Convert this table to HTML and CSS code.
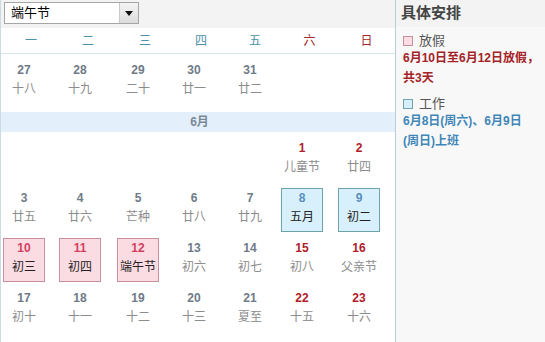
FILE: index.html
```html
<!DOCTYPE html>
<html>
<head>
<meta charset="utf-8">
<link rel="stylesheet" href="styles.css">
</head>
<body>
<div class="page">
  <div class="cal">
    <div class="topbar">
      <div class="select">
        <span class="select-text">端午节</span>
        <span class="select-btn"><span class="tri"></span></span>
      </div>
    </div>
    <div class="grid weekdays">
      <div class="wd">一</div><div class="wd">二</div><div class="wd">三</div><div class="wd">四</div><div class="wd">五</div><div class="wd we">六</div><div class="wd we">日</div>
    </div>
    <div class="grid week">
      <div class="cell"><div class="num">27</div><div class="lun">十八</div></div>
      <div class="cell"><div class="num">28</div><div class="lun">十九</div></div>
      <div class="cell"><div class="num">29</div><div class="lun">二十</div></div>
      <div class="cell"><div class="num">30</div><div class="lun">廿一</div></div>
      <div class="cell"><div class="num">31</div><div class="lun">廿二</div></div>
      <div class="cell empty"></div>
      <div class="cell empty"></div>
    </div>
    <div class="month">6月</div>
    <div class="grid week">
      <div class="cell empty"></div>
      <div class="cell empty"></div>
      <div class="cell empty"></div>
      <div class="cell empty"></div>
      <div class="cell empty"></div>
      <div class="cell red"><div class="num">1</div><div class="lun">儿童节</div></div>
      <div class="cell red"><div class="num">2</div><div class="lun">廿四</div></div>
    </div>
    <div class="grid week">
      <div class="cell"><div class="num">3</div><div class="lun">廿五</div></div>
      <div class="cell"><div class="num">4</div><div class="lun">廿六</div></div>
      <div class="cell"><div class="num">5</div><div class="lun">芒种</div></div>
      <div class="cell"><div class="num">6</div><div class="lun">廿八</div></div>
      <div class="cell"><div class="num">7</div><div class="lun">廿九</div></div>
      <div class="cell work"><div class="num">8</div><div class="lun">五月</div></div>
      <div class="cell work"><div class="num">9</div><div class="lun">初二</div></div>
    </div>
    <div class="grid week">
      <div class="cell hol"><div class="num">10</div><div class="lun">初三</div></div>
      <div class="cell hol"><div class="num">11</div><div class="lun">初四</div></div>
      <div class="cell hol"><div class="num">12</div><div class="lun">端午节</div></div>
      <div class="cell"><div class="num">13</div><div class="lun">初六</div></div>
      <div class="cell"><div class="num">14</div><div class="lun">初七</div></div>
      <div class="cell red"><div class="num">15</div><div class="lun">初八</div></div>
      <div class="cell red"><div class="num">16</div><div class="lun">父亲节</div></div>
    </div>
    <div class="grid week">
      <div class="cell"><div class="num">17</div><div class="lun">初十</div></div>
      <div class="cell"><div class="num">18</div><div class="lun">十一</div></div>
      <div class="cell"><div class="num">19</div><div class="lun">十二</div></div>
      <div class="cell"><div class="num">20</div><div class="lun">十三</div></div>
      <div class="cell"><div class="num">21</div><div class="lun">夏至</div></div>
      <div class="cell red"><div class="num">22</div><div class="lun">十五</div></div>
      <div class="cell red"><div class="num">23</div><div class="lun">十六</div></div>
    </div>
  </div>
  <div class="side">
    <div class="side-head">具体安排</div>
    <div class="item">
      <div class="legend"><span class="sq sq-hol"></span>放假</div>
      <div class="detail detail-hol">6月10日至6月12日放假，<span class="nw">共3天</span></div>
    </div>
    <div class="item item2">
      <div class="legend"><span class="sq sq-work"></span>工作</div>
      <div class="detail detail-work">6月8日(周六)、6月9日<span class="nw">(周日)上班</span></div>
    </div>
  </div>
</div>
</body>
</html>
```

FILE: styles.css
```css
html, body {
  margin: 0;
  padding: 0;
  background: #fff;
}
body {
  font-family: "Liberation Sans", Arial, "Noto Sans CJK SC", sans-serif;
  font-size: 12px;
}
.page {
  display: flex;
  width: 545px;
  height: 342px;
  overflow: hidden;
}
.cal {
  width: 395px;
  flex: none;
  border-left: 1px solid #c9dce6;
  box-sizing: border-box;
  background: #fff;
}
.topbar {
  height: 28px;
  background: #f3f3f3;
  padding: 2px 0 0 3px;
  box-sizing: border-box;
}
.select {
  width: 135px;
  height: 22px;
  box-sizing: border-box;
  border: 1px solid #a5a5a5;
  background: #fff;
  display: flex;
  align-items: stretch;
}
.select-text {
  flex: 1;
  font-size: 13px;
  line-height: 20px;
  padding-left: 6px;
  color: #000;
}
.select-btn {
  width: 18px;
  border-left: 1px solid #c8c8c8;
  background: linear-gradient(#f4f4f4, #dcdcdc);
  display: flex;
  align-items: center;
  justify-content: center;
}
.tri {
  width: 0;
  height: 0;
  border-left: 4px solid transparent;
  border-right: 4px solid transparent;
  border-top: 5px solid #111;
  margin-top: 1px;
}
.grid {
  display: grid;
  grid-template-columns: 56px 58px 56px 56px 52px 57px 57px;
  padding-left: 2px;
}
.weekdays {
  height: 26px;
  border-bottom: 1px solid #d5e3ea;
  box-sizing: border-box;
}
.wd {
  text-align: center;
  line-height: 26px;
  color: #4a91aa;
  font-size: 12px;
}
.wd.we {
  color: #a0262b;
}
.week {
  height: 50px;
  padding-top: 6px;
  box-sizing: border-box;
}
.cell {
  width: 42px;
  height: 44px;
  box-sizing: border-box;
  border: 1px solid transparent;
  text-align: center;
}
.num {
  font-weight: bold;
  font-size: 12px;
  line-height: 18px;
  color: #6e7a87;
}
.lun {
  font-size: 12px;
  line-height: 20px;
  color: #8c8c8c;
  white-space: nowrap;
}
.cell.red .num {
  color: #b0202a;
}
.cell.work {
  background: #d7f0fc;
  border-color: #6fa4aa;
}
.cell.work .num {
  color: #5a8fbe;
}
.cell.work .lun,
.cell.hol .lun {
  color: #222;
}
.cell.hol {
  background: #fcdce3;
  border-color: #c8909f;
}
.cell.hol .num {
  color: #d2405e;
}
.month {
  margin-top: 8px;
  height: 20px;
  line-height: 20px;
  background: #e3f0fb;
  text-align: center;
  font-weight: bold;
  color: #7b8996;
  font-size: 12px;
  padding-left: 3px;
}
.side {
  flex: 1;
  border-left: 1px solid #b9cdd8;
  background: #f8f8f8;
}
.side-head {
  height: 27px;
  line-height: 26px;
  background: #f3f3f3;
  font-size: 15px;
  font-weight: bold;
  color: #444;
  padding-left: 5px;
}
.item {
  padding: 6px 0 0 7px;
  width: 142px;
}
.item2 {
  padding-top: 8px;
}
.legend {
  font-size: 13px;
  line-height: 16px;
  color: #555;
  display: flex;
  align-items: center;
}
.sq {
  width: 10px;
  height: 10px;
  box-sizing: border-box;
  margin-right: 6px;
  border: 1px solid;
}
.sq-hol {
  background: #fcdce3;
  border-color: #c8909f;
}
.sq-work {
  background: #d7f0fc;
  border-color: #6fa4aa;
}
.detail {
  font-size: 12px;
  font-weight: bold;
  line-height: 20px;
  margin-top: -1px;
}
.nw {
  white-space: nowrap;
}
.detail-hol {
  color: #a52226;
}
.detail-work {
  color: #3f86b8;
}
```
